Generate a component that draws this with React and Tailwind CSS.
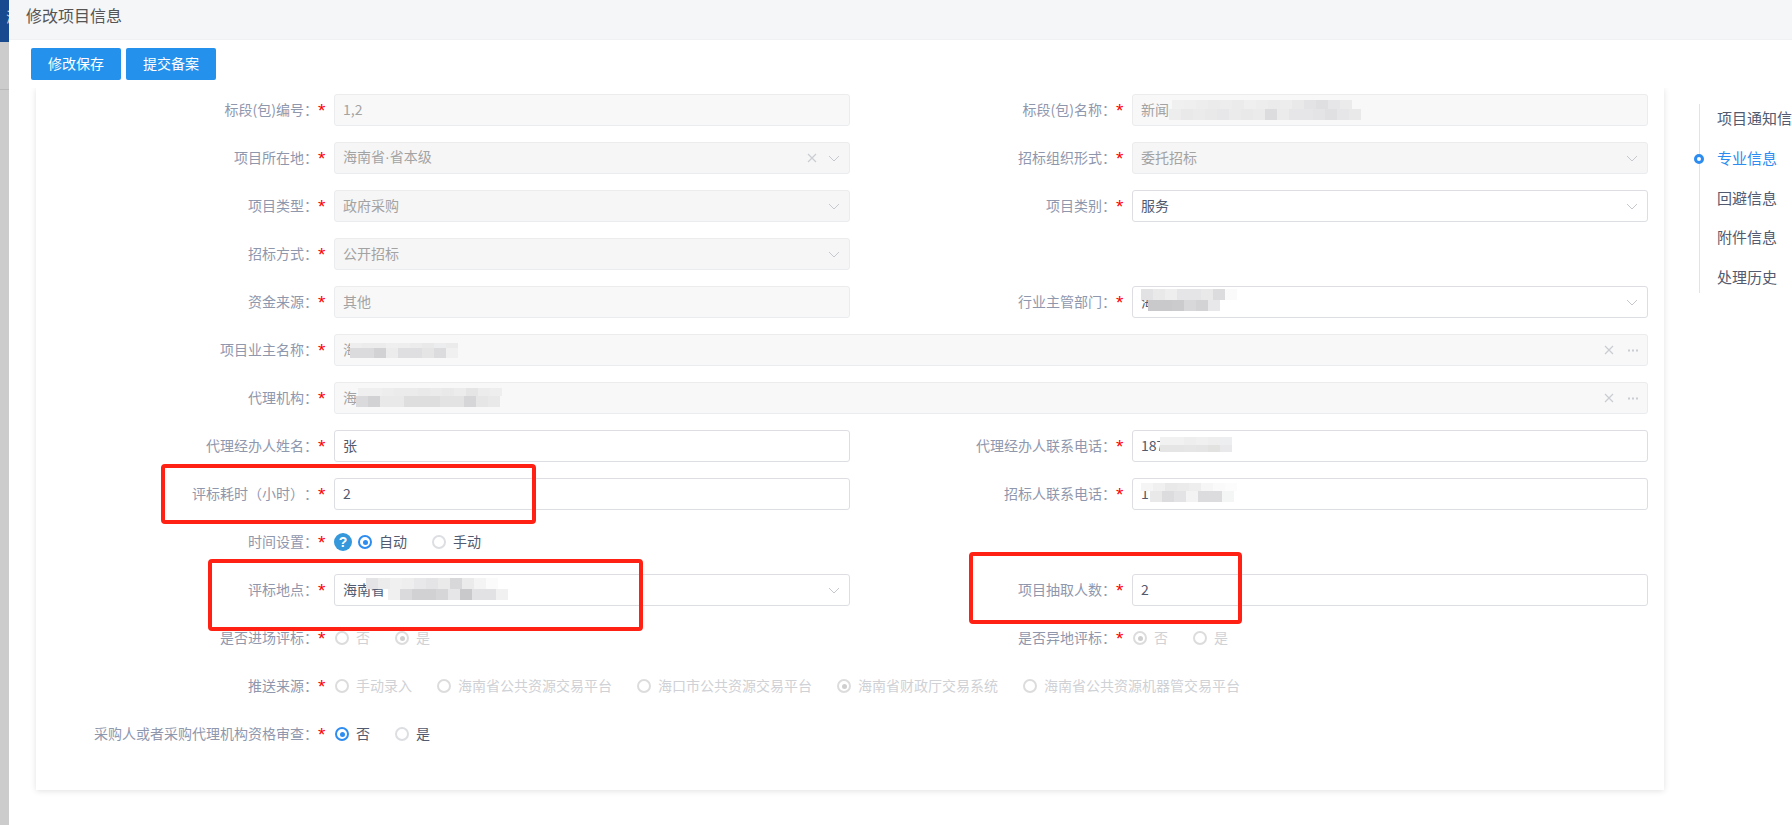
import React from "react";

const FONT = "font-['Noto_Sans_CJK_SC','Microsoft_YaHei',sans-serif]";

function Mosaic({ x, y, cw = 12, rows }) {
  // rows: [{ x, h, c: [shades] }] : a blur mosaic is a drawing, x / y relative to its input
  const height = rows.reduce((s, r) => s + r.h, 0);
  const width = Math.max(...rows.map((r) => (r.x || 0) + r.c.length * cw));
  let top = 0;
  return (
    <svg
      className="absolute pointer-events-none"
      style={{ left: x, top: y, width, height }}
      width={width}
      height={height}
    >
      {rows.map((r, i) => {
        const cur = top;
        top += r.h;
        return r.c.map((c, j) => (
          <rect key={i + "-" + j} x={(r.x || 0) + j * cw} y={cur} width={cw} height={r.h} fill={"#" + c} />
        ));
      })}
    </svg>
  );
}

function Chevron() {
  return (
    <svg width="12" height="7" viewBox="0 0 12 7" fill="none" className="block">
      <path d="M1 1l5 5 5-5" stroke="#c5c8ce" strokeWidth="1" />
    </svg>
  );
}

function Clear() {
  return (
    <svg width="10" height="10" viewBox="0 0 10 10" fill="none" className="block">
      <path d="M1 1l8 8M9 1l-8 8" stroke="#c9ccd1" strokeWidth="1.2" />
    </svg>
  );
}

function Dots() {
  return (
    <svg width="10" height="3" viewBox="0 0 10 3" className="block">
      <rect x="0" y="0.5" width="2" height="2" fill="#c9ccd1" />
      <rect x="4" y="0.5" width="2" height="2" fill="#c9ccd1" />
      <rect x="8" y="0.5" width="2" height="2" fill="#c9ccd1" />
    </svg>
  );
}

function Field({ label, full, children }) {
  return (
    <div className={"flex items-center h-8 " + (full ? "col-span-2" : "")}>
      <div className="relative -top-px w-[266px] shrink-0 text-right whitespace-nowrap text-[14px] text-[#8f97ad] [text-spacing-trim:space-all]">{label}：</div>
      <div className="w-[16px] shrink-0 -ml-[2px] mr-[2px] text-[#f00] text-[19px] leading-8 font-['Liberation_Mono',monospace] h-8 overflow-hidden">
        <span className="relative top-[2px]">*</span>
      </div>
      <div className="flex-1 min-w-0 h-8 flex items-center">{children}</div>
    </div>
  );
}

function Box({ value, disabled, select, clear, dots, children }) {
  const bg = disabled ? (select ? "bg-[#f6f6f6]" : "bg-[#f8f8f8]") : "bg-white";
  const border = disabled ? "border-[#ebecee]" : "border-[#dcdee2]";
  const color = disabled ? "text-[#a3a3a3]" : "text-[#515a6e]";
  return (
    <div className={"relative w-full h-8 rounded-[3px] border overflow-hidden flex items-center pl-2 text-[14px] " + bg + " " + border + " " + color}>
      <span className="relative -top-px whitespace-nowrap">{value}</span>
      {children}
      <div className="ml-auto flex items-center">
        {clear ? <span className={dots ? "mr-[14px]" : "mr-[11px]"}><Clear /></span> : null}
        {select ? <span className="mr-[9px]"><Chevron /></span> : null}
        {dots ? <span className="mr-[9px]"><Dots /></span> : null}
      </div>
    </div>
  );
}

function Radio({ label, checked, disabled }) {
  const ring = disabled ? "border-[#dcdcdc]" : checked ? "border-[#2d8cf0]" : "border-[#dcdee2]";
  const dot = disabled ? "bg-[#cfcfcf]" : "bg-[#2d8cf0]";
  return (
    <div className="flex items-center gap-[7px]">
      <span className={"w-[14px] h-[14px] rounded-full border-2 flex items-center justify-center " + ring}>
        {checked ? <span className={"w-[5px] h-[5px] rounded-full " + dot} /> : null}
      </span>
      <span className={"relative -top-px text-[14px] whitespace-nowrap " + (disabled ? "text-[#cfd1d5]" : "text-[#515a6e]")}>{label}</span>
    </div>
  );
}

function Radios({ items, checked, disabled, inset = true }) {
  return (
    <div className={"flex items-center gap-[25px] " + (inset ? "ml-px" : "")}>
      {items.map((t) => (
        <Radio key={t} label={t} checked={t === checked} disabled={disabled} />
      ))}
    </div>
  );
}

function RedBox({ className }) {
  return <div className={"absolute border-[4px] border-[#ff2113] rounded-[4px] pointer-events-none " + className} />;
}

export default function App() {
  const nav = ["项目通知信息", "专业信息", "回避信息", "附件信息", "处理历史"];
  return (
    <div className={"relative flex w-full h-screen overflow-hidden bg-white " + FONT}>
      {/* left edge of the page underneath */}
      <div className="w-[9px] shrink-0 flex flex-col bg-[#cccccc]">
        <div className="h-[42px] bg-[#174a8f] overflow-hidden pl-[6px] pt-[6px] text-[14px] leading-5 text-[#c8d6ea] whitespace-nowrap">海</div>
        <div className="h-[48px] border-b border-[#b9b9b9]" />
      </div>

      <div className="flex-1 min-w-0 flex flex-col">
        <div className="h-10 shrink-0 bg-[#f5f6f8] border-b border-[#f0f1f3] pl-[17px] text-[16px] leading-[30px] text-[#555555]">修改项目信息</div>
        <div className="h-12 shrink-0 pt-2 pl-[22px] flex gap-[5px] items-start">
          <button className="w-[90px] h-8 pb-[2px] rounded-[2px] bg-[#2491ec] text-white text-[14px]">修改保存</button>
          <button className="w-[90px] h-8 pb-[2px] rounded-[2px] bg-[#2491ec] text-white text-[14px]">提交备案</button>
        </div>

        <div className="flex-1 min-h-0 overflow-hidden flex items-start pl-[27px]">
          <div className="w-[1628px] shrink-0 bg-white shadow-[0_1px_6px_rgba(0,0,0,0.12)] px-4 pt-[6px] pb-10 grid grid-cols-2 gap-y-4">
            <Field label="标段(包)编号"><Box disabled value="1,2" /></Field>
            <Field label="标段(包)名称">
              <Box disabled value="新闻">
                <Mosaic x={36} y={5} rows={[
                  { h: 9, x: 3, c: ["f0f0f0", "efeff0", "ededee", "ebebec", "ededee", "ebebec", "efeff0", "ededee", "ebebec", "ededee", "e9e9ea", "e3e3e5", "dfdfe1", "e6e6e8", "ebebec"] },
                  { h: 11, c: ["ededee", "e9e9ea", "ebebec", "e9e9ea", "e7e7e9", "ebebec", "e9e9ea", "ebebec", "dcdcde", "ebebec", "e6e6e8", "e6e6e8", "e4e4e6", "e0e0e2", "e6e6e8", "e9e9ea"] },
                ]} />
              </Box>
            </Field>

            <Field label="项目所在地">
              <Box disabled select clear value={<>海南省<span className="font-['Liberation_Sans',sans-serif]">·</span>省本级</>} />
            </Field>
            <Field label="招标组织形式"><Box disabled select value="委托招标" /></Field>

            <Field label="项目类型"><Box disabled select value="政府采购" /></Field>
            <Field label="项目类别"><Box select value="服务" /></Field>

            <Field label="招标方式"><Box disabled select value="公开招标" /></Field>
            <div />

            <Field label="资金来源"><Box disabled value="其他" /></Field>
            <Field label="行业主管部门">
              <Box select value="海">
                <Mosaic x={8} y={2} rows={[
                  { h: 11, c: ["e2e2e4", "e9e9ea", "eeeeef", "e5e5e7", "e5e5e7", "e9e9ea", "dcdcdf", "fafafa"] },
                  { h: 11, x: 7, c: ["c9c9cc", "c9c9cc", "cbcbce", "d8d8da", "d3d3d6", "e8e8ea"] },
                ]} />
              </Box>
            </Field>

            <Field label="项目业主名称" full>
              <Box disabled select={false} clear dots value="海">
                <Mosaic x={15} y={8} rows={[
                  { h: 5, c: ["eeeeef", "ececed", "ececed", "efeff0", "eeeeef", "ececed", "e9e9ea", "ecedee", "ebebec"] },
                  { h: 10, c: ["dbdbdd", "dbdbdd", "d2d2d5", "ececed", "dfdfe1", "dfdfe1", "e5e5e6", "dcdcde", "f0f0f1"] },
                ]} />
              </Box>
            </Field>

            <Field label="代理机构" full>
              <Box disabled clear dots value="海">
                <Mosaic x={21} y={5} rows={[
                  { h: 8, x: 2, c: ["efefef", "efefef", "ededee", "ebebec", "ebebec", "e9e9ea", "ebebec", "e9e9ea", "ececed", "e5e5e6", "ececed", "eeeeee"] },
                  { h: 11, c: ["dadadc", "d2d2d5", "e9e9ea", "e9e9ea", "dededf", "dededf", "dededf", "e3e3e4", "e3e3e4", "d6d6d9", "e6e6e7", "e9e9ea"] },
                ]} />
              </Box>
            </Field>

            <Field label="代理经办人姓名"><Box value="张" /></Field>
            <Field label="代理经办人联系电话">
              <Box value="187">
                <Mosaic x={27} y={6} rows={[
                  { h: 8, c: ["f1f1f1", "f1f1f1", "eeeeee", "f0f0f1", "eeeeef", "edeeef"] },
                  { h: 7, c: ["e5e5e6", "e5e5e6", "e6e6e6", "e5e5e5", "e2e2e1", "e9e9eb"] },
                ]} />
              </Box>
            </Field>

            <Field label="评标耗时（小时）"><Box value="2" /></Field>
            <Field label="招标人联系电话">
              <Box value="1">
                <Mosaic x={8} y={4} rows={[
                  { h: 8, c: ["f5f5f5", "f0f0f1", "e9e9ea", "ebebec", "eeeeef", "f6f6f6", "fafafa", "fcfcfc"] },
                  { h: 11, x: 9, c: ["e9e9ea", "dcdcdf", "e3e3e5", "f3f3f3", "dcdcdf", "dcdcdf", "f4f5f5"] },
                ]} />
              </Box>
            </Field>

            <Field label="时间设置">
              <span className="w-[18px] h-[18px] mr-[6px] rounded-full bg-[#3498db] text-white text-[14px] font-bold leading-[18px] text-center font-['Liberation_Sans',sans-serif]">?</span>
              <Radios inset={false} items={["自动", "手动"]} checked="自动" />
            </Field>
            <div />

            <Field label="评标地点">
              <Box select value="海南省">
                <Mosaic x={31} y={3} rows={[
                  { h: 11, c: ["e4e4e6", "ececed", "f0f0f1", "eeeeef", "e8e8ea", "e4e4e6", "eaeaeb", "d8d8db", "ebebec", "f4f4f5", "fbfbfb"] },
                  { h: 11, x: 22, c: ["f0f0f1", "dadadd", "d1d1d4", "d1d1d4", "d6d6d9", "e6e6e8", "c9c9cc", "e2e2e4", "e2e2e4", "f1f1f2"] },
                ]} />
              </Box>
            </Field>
            <Field label="项目抽取人数"><Box value="2" /></Field>

            <Field label="是否进场评标"><Radios disabled items={["否", "是"]} checked="是" /></Field>
            <Field label="是否异地评标"><Radios disabled items={["否", "是"]} checked="否" /></Field>

            <Field label="推送来源" full>
              <Radios disabled items={["手动录入", "海南省公共资源交易平台", "海口市公共资源交易平台", "海南省财政厅交易系统", "海南省公共资源机器管交易平台"]} checked="海南省财政厅交易系统" />
            </Field>

            <Field label="采购人或者采购代理机构资格审查" full><Radios items={["否", "是"]} checked="否" /></Field>
          </div>

          {/* anchor navigation */}
          <div className="relative ml-[35px] mt-4 h-[189px] shrink-0 border-l border-[#dfe3ea] pl-[17px] pt-[1px] flex flex-col gap-[11.75px]">
            {nav.map((t, i) => (
              <div key={t} className={"relative h-[28px] leading-[28px] text-[15px] whitespace-nowrap " + (i === 1 ? "text-[#2d8cf0]" : "text-[#515a6e]")}>
                {i === 1 ? <span className="absolute left-[-23px] top-[9px] w-[10px] h-[10px] rounded-full border-[3px] border-[#2d8cf0] bg-white" /> : null}
                <span className="relative -top-px">{t}</span>
              </div>
            ))}
          </div>
        </div>
      </div>

      <RedBox className="left-[161px] top-[464px] w-[375px] h-[60px]" />
      <RedBox className="left-[208px] top-[559px] w-[435px] h-[72px]" />
      <RedBox className="left-[969px] top-[552px] w-[273px] h-[72px]" />
    </div>
  );
}
